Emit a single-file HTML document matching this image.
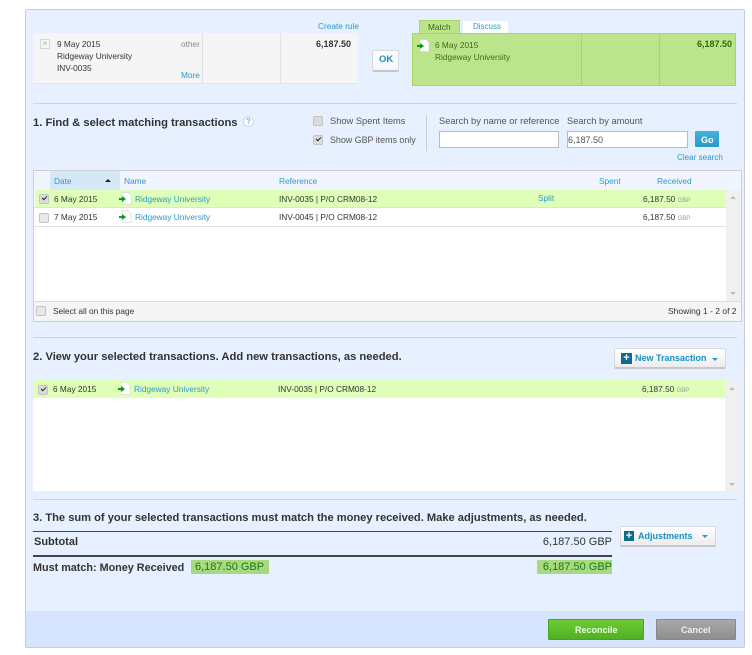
<!DOCTYPE html>
<html><head><meta charset="utf-8">
<style>
html,body{margin:0;padding:0;background:#fff}
#p{position:relative;width:752px;height:655px;overflow:hidden;font-family:"Liberation Sans",sans-serif;font-size:8.3px;color:#333;filter:blur(.3px)}
#p div,#p span.t{position:absolute;white-space:nowrap}
.t{line-height:12px}
.l{color:#2a9bc8}
.h{font-weight:bold;font-size:11.2px;color:#333;line-height:14px}
.f{font-size:9.3px;color:#555}
.b{font-size:9px;font-weight:bold}
.cb{width:8px;height:8px;border:1px solid #c4c4c4;border-radius:2px;background:#dcdcdc}
.ck:after{content:"";position:absolute;left:1.5px;top:1px;width:4px;height:2px;border-left:1.5px solid #222;border-bottom:1.5px solid #222;transform:rotate(-45deg)}
.sep{height:1px;background:#c9d5e6;left:33px;width:704px}
.gbp{color:#999;font-size:6px}
.sm{font-size:11px;color:#333}
.btn{background:linear-gradient(#fff,#ececec);border:1px solid #d5dae0;border-bottom:2px solid #c4c8cc;border-radius:2px;box-sizing:border-box}
.plus{width:11px;height:11px;background:#0e6b8f;color:#fff;font-weight:bold;font-size:11px;line-height:10px;text-align:center}
.tri{width:0;height:0;border-left:3px solid transparent;border-right:3px solid transparent;border-top:3px solid #2a9bc8}
</style></head><body><div id="p">
<div style="left:25px;top:9px;width:720px;height:639px;background:#e6f0fe;border:1px solid #c8ccd2;border-radius:2px;box-sizing:border-box"></div>
<div style="left:26px;top:611px;width:718px;height:36px;background:#d6e5fd"></div>

<div class="t l" style="left:318px;top:20px;font-size:8.3px">Create rule</div>
<div style="left:33px;top:33px;width:325px;height:51px;background:#f5f5f5;border-bottom:1px solid #e4e4e4;box-sizing:border-box"></div>
<div style="left:202px;top:33px;width:1px;height:51px;background:#e2e2e2"></div>
<div style="left:280px;top:33px;width:1px;height:51px;background:#e2e2e2"></div>
<div style="left:40px;top:39px;width:8px;height:8px;border:1px solid #d8d8d8;color:#aaa;font-size:8px;line-height:8px;text-align:center">×</div>
<div class="t" style="left:57px;top:38px">9 May 2015</div>
<div class="t" style="left:57px;top:50px">Ridgeway University</div>
<div class="t" style="left:57px;top:62px">INV-0035</div>
<div class="t" style="left:181px;top:38px;color:#888">other</div>
<div class="t l" style="left:181px;top:69px">More</div>
<div class="t b" style="left:316px;top:38px">6,187.50</div>

<div class="btn" style="left:372px;top:50px;width:27px;height:22px;background:linear-gradient(#fff,#f2f6fb)"></div>
<div class="t" style="left:379px;top:54px;font-weight:bold;color:#1a90c4;font-size:9.5px">OK</div>

<div style="left:419px;top:20px;width:41px;height:13px;background:#bce48a;border:1px solid #a8d85e;border-bottom:0;box-sizing:border-box"></div>
<div class="t" style="left:428px;top:21px;color:#2f6a10">Match</div>
<div style="left:463px;top:21px;width:45px;height:12px;background:#fff"></div>
<div class="t l" style="left:473px;top:21px;font-size:8px">Discuss</div>
<div style="left:412px;top:33px;width:324px;height:53px;background:#bce48a;border:1px solid #a8d85e;box-sizing:border-box"></div>
<div style="left:581px;top:33px;width:1px;height:53px;background:#a8d85e"></div>
<div style="left:659px;top:33px;width:1px;height:53px;background:#a8d85e"></div>
<svg style="position:absolute;left:417px;top:39px" width="13" height="13"><path d="M3 .5h6l3 3v9H3z" fill="#fff" stroke="#ccc" stroke-width=".5"/><path d="M0 6h3V4l4 3-4 3V8H0z" fill="#0a9a1e"/></svg>
<div class="t" style="left:435px;top:39px;color:#3f6a20">6 May 2015</div>
<div class="t" style="left:435px;top:51px;color:#3f6a20">Ridgeway University</div>
<div class="t b" style="left:697px;top:38px;color:#2f6a10">6,187.50</div>

<div class="sep" style="top:103px"></div>
<div class="h" style="left:33px;top:116px">1. Find &amp; select matching transactions</div>
<div style="left:243px;top:116px;width:11px;height:11px;border-radius:50%;border:1px solid #c5d5e5;background:#fff;box-sizing:border-box;color:#8ab;font-size:8px;line-height:9px;text-align:center;font-weight:bold">?</div>
<div class="cb" style="left:313px;top:116px"></div>
<div class="t f" style="left:330px;top:115px">Show Spent Items</div>
<div class="cb ck" style="left:313px;top:135px"></div>
<div class="t f" style="left:330px;top:134px;font-size:8.9px">Show GBP items only</div>
<div style="left:426px;top:115px;width:1px;height:36px;background:#c8ced6"></div>
<div class="t f" style="left:439px;top:115px">Search by name or reference</div>
<div class="t f" style="left:567px;top:115px">Search by amount</div>
<div style="left:439px;top:131px;width:120px;height:17px;background:#fff;border:1px solid #bbb;box-sizing:border-box"></div>
<div style="left:567px;top:131px;width:121px;height:17px;background:#fff;border:1px solid #bbb;box-sizing:border-box"></div>
<div class="t" style="left:568px;top:134px;color:#555;font-size:9px">6,187.50</div>
<div style="left:695px;top:131px;width:24px;height:16px;background:linear-gradient(#45b0dc,#2a9bc8);border-radius:1px"></div>
<div class="t b" style="left:701px;top:134px;color:#fff">Go</div>
<div class="t l" style="left:677px;top:152px;font-size:8.1px">Clear search</div>

<div style="left:33px;top:170px;width:709px;height:152px;background:#fff;border:1px solid #ccd0d6;box-sizing:border-box"></div>
<div style="left:34px;top:171px;width:707px;height:19px;background:#f0f5ff"></div>
<div style="left:50px;top:171px;width:70px;height:19px;background:#d5e8f8"></div>
<div class="t l" style="left:54px;top:175px">Date</div>
<div style="left:105px;top:179px;width:0;height:0;border-left:3px solid transparent;border-right:3px solid transparent;border-bottom:3px solid #222"></div>
<div class="t l" style="left:124px;top:175px">Name</div>
<div class="t l" style="left:279px;top:175px">Reference</div>
<div class="t l" style="left:599px;top:175px">Spent</div>
<div class="t l" style="left:657px;top:175px">Received</div>
<div style="left:35px;top:190px;width:691px;height:17px;background:#dfffb8"></div>
<div style="left:34px;top:207px;width:692px;height:1px;background:#e0e0e0"></div>
<div style="left:34px;top:226px;width:692px;height:1px;background:#e2e2e2"></div>
<div style="left:726px;top:190px;width:15px;height:111px;background:#f0f0f0"></div>
<div style="left:34px;top:301px;width:707px;height:20px;background:#f5f5f5;border-top:1px solid #ddd;box-sizing:border-box"></div>
<div style="left:730px;top:196px;width:0;height:0;border-left:3.5px solid transparent;border-right:3.5px solid transparent;border-bottom:3.5px solid #bbb"></div>
<div style="left:730px;top:292px;width:0;height:0;border-left:3.5px solid transparent;border-right:3.5px solid transparent;border-top:3.5px solid #bbb"></div>

<div class="cb ck" style="left:39px;top:194px"></div>
<div class="t" style="left:54px;top:193px">6 May 2015</div>
<svg style="position:absolute;left:119px;top:192px" width="13" height="13"><path d="M3 .5h6l3 3v9H3z" fill="#fff" stroke="#ccc" stroke-width=".5"/><path d="M0 6h3V4l4 3-4 3V8H0z" fill="#0a9a1e"/></svg>
<div class="t l" style="left:135px;top:193px">Ridgeway University</div>
<div class="t" style="left:279px;top:193px">INV-0035 | P/O CRM08-12</div>
<div class="t l" style="left:538px;top:192px">Split</div>
<div class="t" style="left:643px;top:193px">6,187.50 <span class="gbp">GBP</span></div>

<div class="cb" style="left:39px;top:213px;background:#e8e8e8"></div>
<div class="t" style="left:54px;top:211px">7 May 2015</div>
<svg style="position:absolute;left:119px;top:210px" width="13" height="13"><path d="M3 .5h6l3 3v9H3z" fill="#fff" stroke="#ccc" stroke-width=".5"/><path d="M0 6h3V4l4 3-4 3V8H0z" fill="#0a9a1e"/></svg>
<div class="t l" style="left:135px;top:211px">Ridgeway University</div>
<div class="t" style="left:279px;top:211px">INV-0045 | P/O CRM08-12</div>
<div class="t" style="left:643px;top:211px">6,187.50 <span class="gbp">GBP</span></div>

<div class="cb" style="left:36px;top:306px;background:#e8e8e8"></div>
<div class="t" style="left:53px;top:305px">Select all on this page</div>
<div class="t" style="left:668px;top:305px;font-size:8.5px">Showing 1 - 2 of 2</div>

<div class="sep" style="top:337px"></div>
<div class="h" style="left:33px;top:350px">2. View your selected transactions. Add new transactions, as needed.</div>
<div class="btn" style="left:614px;top:348px;width:112px;height:21px"></div>
<div class="plus" style="left:621px;top:353px">+</div>
<div class="t b" style="left:635px;top:352px;color:#1a90c4">New Transaction</div>
<div class="tri" style="left:712px;top:358px"></div>

<div style="left:33px;top:380px;width:705px;height:111px;background:#fff"></div>
<div style="left:33px;top:380px;width:692px;height:18px;background:#dfffb8"></div>
<div style="left:725px;top:380px;width:14px;height:111px;background:#f0f0f0"></div>
<div style="left:729px;top:387px;width:0;height:0;border-left:3.5px solid transparent;border-right:3.5px solid transparent;border-bottom:3.5px solid #bbb"></div>
<div style="left:729px;top:483px;width:0;height:0;border-left:3.5px solid transparent;border-right:3.5px solid transparent;border-top:3.5px solid #bbb"></div>
<div class="cb ck" style="left:38px;top:385px"></div>
<div class="t" style="left:53px;top:383px">6 May 2015</div>
<svg style="position:absolute;left:118px;top:382px" width="13" height="13"><path d="M3 .5h6l3 3v9H3z" fill="#fff" stroke="#ccc" stroke-width=".5"/><path d="M0 6h3V4l4 3-4 3V8H0z" fill="#0a9a1e"/></svg>
<div class="t l" style="left:134px;top:383px">Ridgeway University</div>
<div class="t" style="left:278px;top:383px">INV-0035 | P/O CRM08-12</div>
<div class="t" style="left:642px;top:383px">6,187.50 <span class="gbp">GBP</span></div>

<div class="sep" style="top:499px"></div>
<div class="h" style="left:33px;top:511px;font-size:11.12px">3. The sum of your selected transactions must match the money received. Make adjustments, as needed.</div>
<div style="left:33px;top:531px;width:579px;height:1px;background:#444"></div>
<div class="t sm" style="left:34px;top:536px;font-weight:bold">Subtotal</div>
<div class="t sm" style="right:140px;top:536px">6,187.50 GBP</div>
<div style="left:33px;top:555px;width:579px;height:2px;background:#444"></div>
<div class="t sm" style="left:33px;top:562px;font-weight:bold;font-size:10.8px">Must match: Money Received</div>
<div style="left:191px;top:560px;width:78px;height:14px;background:#a8d880"></div>
<div class="t sm" style="left:195px;top:561px;color:#1a7a1a">6,187.50 GBP</div>
<div style="left:537px;top:560px;width:75px;height:14px;background:#a8d880"></div>
<div class="t sm" style="right:140px;top:561px;color:#1a7a1a">6,187.50 GBP</div>
<div class="btn" style="left:620px;top:526px;width:96px;height:21px"></div>
<div class="plus" style="left:624px;top:531px;width:10px;height:10px">+</div>
<div class="t b" style="left:638px;top:530px;color:#1a90c4">Adjustments</div>
<div class="tri" style="left:702px;top:535px"></div>

<div style="left:548px;top:619px;width:96px;height:21px;background:linear-gradient(#6ccb34,#4fb024);border:1px solid #49a321;box-sizing:border-box;border-radius:1px"></div>
<div class="t b" style="left:575px;top:624px;color:#e8ffe0">Reconcile</div>
<div style="left:656px;top:619px;width:80px;height:21px;background:linear-gradient(#a8a8a8,#8e8e8e);border:1px solid #888;box-sizing:border-box;border-radius:1px"></div>
<div class="t b" style="left:681px;top:624px;color:#eee">Cancel</div>
</div></body></html>
